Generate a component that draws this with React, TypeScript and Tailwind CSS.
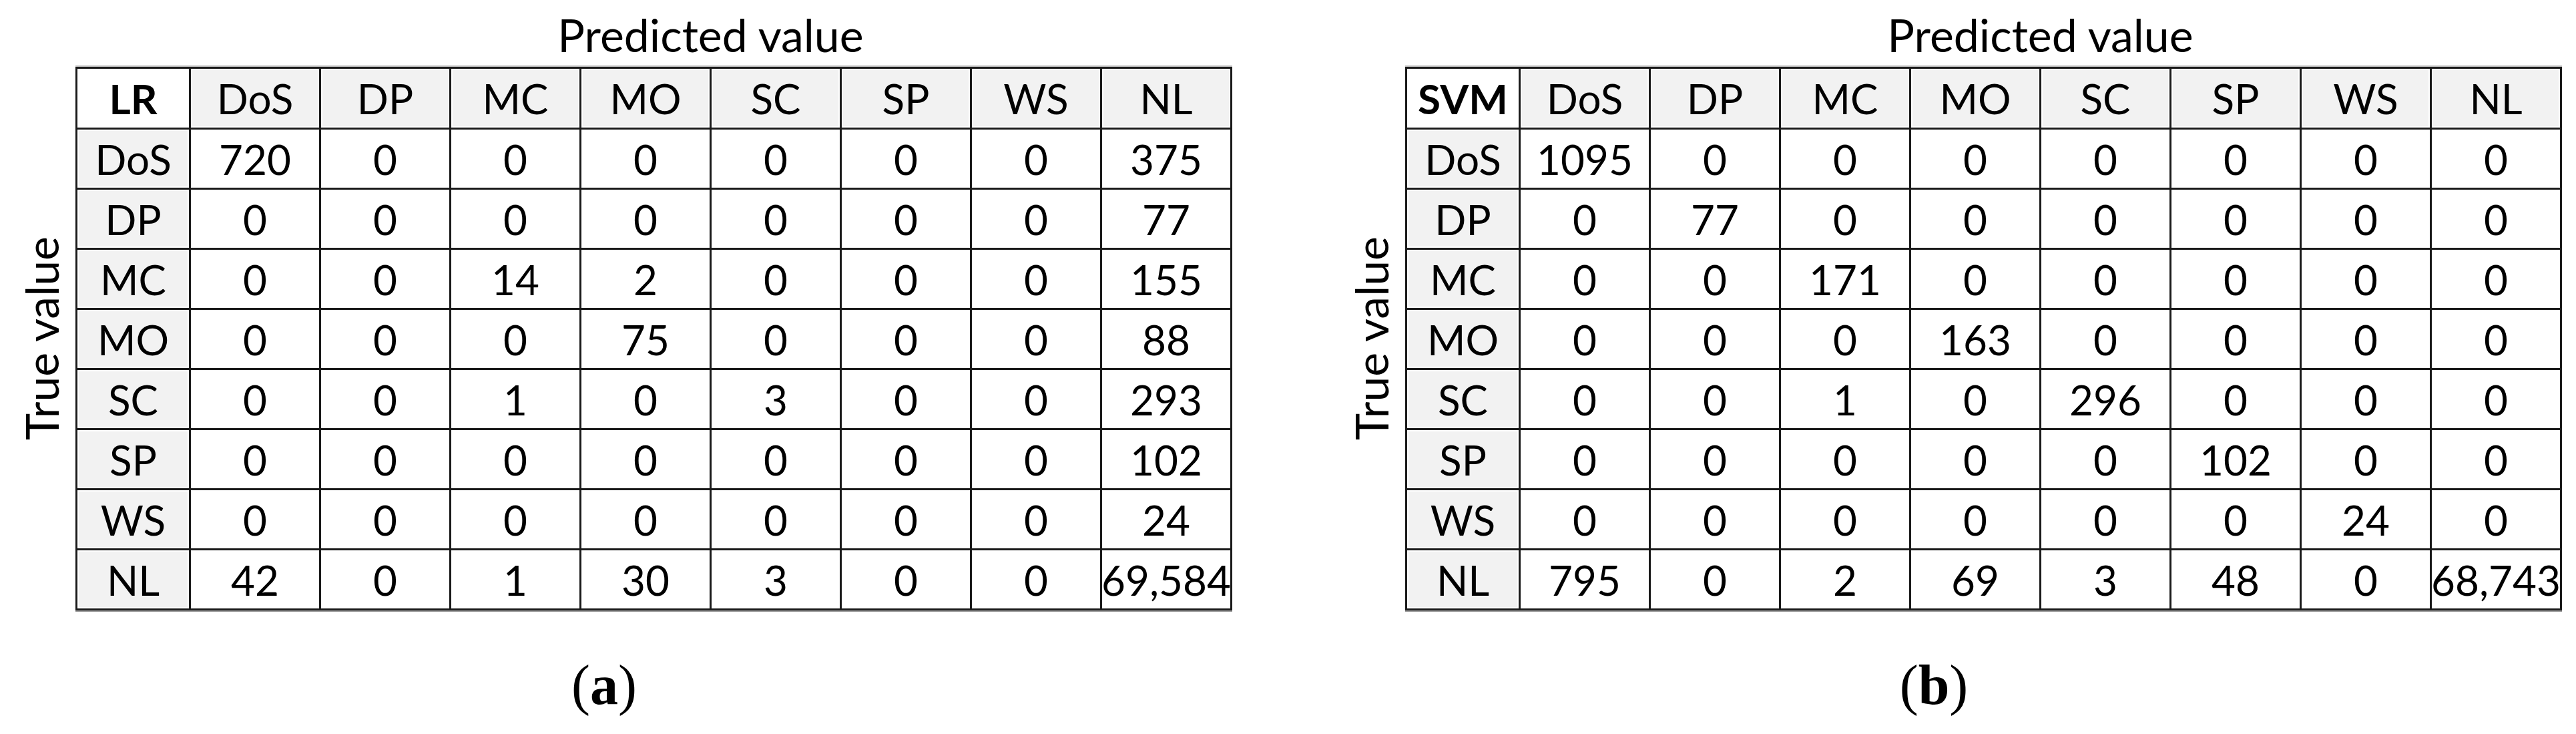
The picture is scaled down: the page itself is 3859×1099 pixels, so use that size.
import { Fragment } from "react";

const CLASSES = ["DoS", "DP", "MC", "MO", "SC", "SP", "WS", "NL"];

const LR_ROWS = [
  ["720", "0", "0", "0", "0", "0", "0", "375"],
  ["0", "0", "0", "0", "0", "0", "0", "77"],
  ["0", "0", "14", "2", "0", "0", "0", "155"],
  ["0", "0", "0", "75", "0", "0", "0", "88"],
  ["0", "0", "1", "0", "3", "0", "0", "293"],
  ["0", "0", "0", "0", "0", "0", "0", "102"],
  ["0", "0", "0", "0", "0", "0", "0", "24"],
  ["42", "0", "1", "30", "3", "0", "0", "69,584"],
];

const SVM_ROWS = [
  ["1095", "0", "0", "0", "0", "0", "0", "0"],
  ["0", "77", "0", "0", "0", "0", "0", "0"],
  ["0", "0", "171", "0", "0", "0", "0", "0"],
  ["0", "0", "0", "163", "0", "0", "0", "0"],
  ["0", "0", "1", "0", "296", "0", "0", "0"],
  ["0", "0", "0", "0", "0", "102", "0", "0"],
  ["0", "0", "0", "0", "0", "0", "24", "0"],
  ["795", "0", "2", "69", "3", "48", "0", "68,743"],
];

// grey label cells keep a thin white rim inside the grid line, like Excel
const labelCell =
  "flex items-center justify-center bg-[#f2f2f2] shadow-[inset_0_0_0_2px_#fff]";
const valueCell = "flex items-center justify-center bg-white";

function Matrix({ name, rows }: { name: string; rows: string[][] }) {
  return (
    <div className="grid grid-cols-[167px_repeat(8,192px)] grid-rows-[88px_repeat(8,87px)] gap-[3px] bg-[#1a1a1a] p-[3px] text-[62px] leading-none text-black shadow-[0_-2px_0_#c4c4c4,0_2px_0_#9a9a9a]">
      <div className="flex items-center justify-center bg-white font-bold">{name}</div>
      {CLASSES.map((c) => (
        <div key={c} className={labelCell}>
          {c}
        </div>
      ))}
      {rows.map((row, i) => (
        <Fragment key={CLASSES[i]}>
          <div className={labelCell}>{CLASSES[i]}</div>
          {row.map((v, j) => (
            <div key={j} className={valueCell}>
              {v}
            </div>
          ))}
        </Fragment>
      ))}
    </div>
  );
}

function Figure({ name, rows, tag }: { name: string; rows: string[][]; tag: string }) {
  return (
    <div className="flex w-[1846px] flex-col">
      <div className="ml-[283px] h-[68px] text-center text-[68px] leading-none">Predicted value</div>
      <div className="mt-[14px] flex">
        <div className="flex w-[113px] items-center pl-[28px]">
          <span className="rotate-180 text-[68px] leading-none [writing-mode:vertical-rl]">
            True value
          </span>
        </div>
        <Matrix name={name} rows={rows} />
      </div>
      <div className="mt-[70px] pr-[36px] text-center font-['Liberation_Serif',serif] text-[84px] leading-none">
        (<span className="font-bold">{tag}</span>)
      </div>
    </div>
  );
}

export default function App() {
  return (
    <div className="flex h-[1099px] w-[3859px] gap-[146px] overflow-hidden bg-white pt-[18px] font-['Lato',sans-serif] text-black">
      <Figure name="LR" rows={LR_ROWS} tag="a" />
      <Figure name="SVM" rows={SVM_ROWS} tag="b" />
    </div>
  );
}
